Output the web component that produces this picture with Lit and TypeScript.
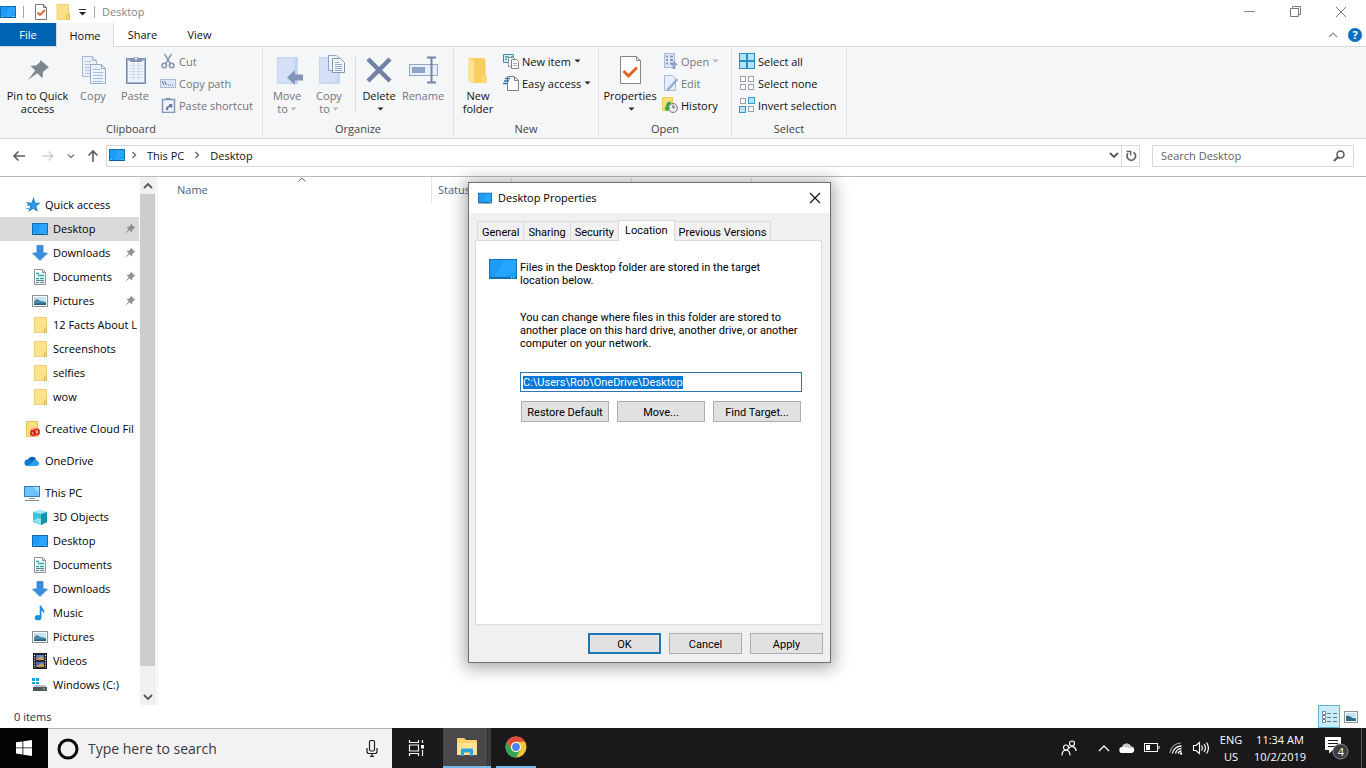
import { LitElement, html, svg, css, TemplateResult } from "lit";
import { customElement, query } from "lit/decorators.js";
import { classMap } from "lit/directives/class-map.js";

type Glyph = TemplateResult;

const icon = (w: number, h: number, body: unknown): Glyph =>
  html`<svg width=${w} height=${h} viewBox="0 0 ${w} ${h}" fill="none" aria-hidden="true">${body}</svg>`;

const deskShape = svg`
  <rect x=".5" y="2.500" width="15" height="11" fill="#1e9bf5" stroke="#0f6fb5"/>
  <path d="M9 3h6v6L9 13H5z" fill="#38b0ff" opacity=".5"/>
  <path d="M1 13.500h14" stroke="#0a5c9c"/><path d="M2 12.500h1M12 12.500h1M14 12.500h1" stroke="#9fd4fb"/>`;
const desktop = icon(16, 16, deskShape);
const desktopLarge = icon(28, 20, svg`
  <rect x=".5" y=".5" width="27" height="19" fill="#1c9bfa" stroke="#1277bd"/>
  <path d="M15 1h12v11L14 18H6z" fill="#2fadff" opacity=".6"/>
  <path d="M1 18.500h26" stroke="#0f6cab"/><path d="M22 18.500h1M24 18.500h1" stroke="#d8f0ff"/>`);
const folder = icon(16, 16, svg`
  <path d="M2.500.5h12v15h-12z" fill="#fbe28b" stroke="#efcf69"/>
  <path d="M12.500 15.500v-4l1-1h1v5z" fill="#f6d772" stroke="#e3bd4c"/>`);
const download = icon(16, 16, svg`<path d="M5 0.500h6v7.500h4.500L8 15.500.5 8H5z" fill="#3e8ddd" stroke="#2f7ac5" stroke-width=".7"/>`);
const documentIcon = icon(16, 16, svg`
  <path d="M2.500.5h8l3 3v12h-11z" fill="#fff" stroke="#8a9298"/><path d="M10.500.5v3h3" stroke="#8a9298"/>
  <path d="M4 4.500h3M6 6.500h6M4 9.500h3M8 9.500h4" stroke="#22a5a5" stroke-width="1.500"/>
  <path d="M4 11.500h8M4 13.500h3M8 13.500h4" stroke="#557b8c"/>`);
const picture = icon(16, 16, svg`
  <rect x=".5" y="2.500" width="15" height="11" fill="#fff" stroke="#8d9297"/>
  <path d="M2 4h12v5H2z" fill="#bfe4f7"/><path d="M2 8l3-2 4 2 5 1v3H2z" fill="#4b8aa0"/><path d="M2 11c4-1 7 0 12-1v2H2z" fill="#235f86"/>`);
const star = icon(16, 16, svg`
  <path d="M9.500 2l1.300 4.100 4.200.3-3.300 2.700 1.200 4.400-3.800-2.400-3.700 2.400 1.500-4.300L4 6.400l4-.2z" fill="#2f9fe8" stroke="#1e83cc" stroke-width="1.200"/>
  <path d="M2.500 5.500h3M3 8.500h3M2 11.500h3" stroke="#49a7e2"/>`);
const cloudFiles = icon(16, 16, svg`
  <path d="M2.500.5h11v15h-11z" fill="#fbdf83" stroke="#e8bd55"/>
  <rect x="6" y="6.500" width="10" height="9" rx="4" fill="#f6a08a"/>
  <circle cx="9" cy="12" r="2.200" stroke="#d2190b" stroke-width="1.400"/><circle cx="12.500" cy="11" r="2.600" stroke="#d2190b" stroke-width="1.400"/>`);
const oneDrive = icon(16, 16, svg`
  <path d="M4 6.500a4.500 4.500 0 0 1 8-.7L9 12H3a3 3 0 0 1 1-5.500z" fill="#0a62b8"/>
  <path d="M3.500 6.500c2 0 3 1 5 2.500L4 13a3.200 3.200 0 0 1-.5-6.500z" fill="#1379d4"/>
  <path d="M8 9.500c1-2.700 4-4 5.500-1.500A2.600 2.600 0 0 1 13 13H3.500z" fill="#2aa0ee"/>`);
const thisPc = icon(16, 16, svg`
  <rect x=".5" y="1.500" width="15" height="10" fill="#6cc2fb" stroke="#347fb5"/><path d="M9 2h6v6z" fill="#a6dcff"/>
  <path d="M5 13.500h6" stroke="#8ba2b2"/><path d="M1 15.500h14" stroke="#7f8d97"/>`);
const cube = icon(16, 16, svg`
  <path d="M8 1l7 2v10l-6 3-8-3V3z" fill="#3cc3dc"/><path d="M1 3l7-2 7 2-6 2z" fill="#9fe8f2"/>
  <path d="M9 5l6-2v10l-6 3z" fill="#1493ae"/><path d="M1 12l5-3 3 1v6z" fill="#8fe3ee"/>`);
const music = icon(16, 16, svg`
  <ellipse cx="6" cy="12.700" rx="3.300" ry="2.600" fill="#1c8fe0"/>
  <path d="M7.700 13V.5h1.500c.3 3 4.600 4 2.800 8.500-.3-2-1.500-3-2.500-3.300V13z" fill="#1c8fe0"/>`);
const video = icon(16, 16, svg`
  <rect x="1.500" y=".5" width="13" height="15" fill="#2b2b33" stroke="#222"/>
  <path d="M4 2h8v5H4z" fill="#5b79cc"/><path d="M4 9h8v5H4z" fill="#4d6cc0"/><path d="M5 6l4-3 3 3v1H4z" fill="#c8a24a"/><path d="M5 13l5-3 2 2v2H4z" fill="#c8a24a"/>
  <path d="M2.500 2v13M13.500 2v13" stroke="#e8e8e8" stroke-dasharray="1 1.500"/>`);
const drive = icon(16, 16, svg`
  <path d="M0 1h3v3H0zM4 1h3v3H4zM0 5h3v2H0zM4 5h3v2H4z" fill="#18a4dc"/>
  <path d="M3 8h10l2 3H1z" fill="#b9bfc3"/><rect x="1" y="10" width="14" height="4" fill="#50575c"/><path d="M11 12h2" stroke="#7fe08a"/>`);
const pinSmall = icon(12, 12, svg`
  <path d="M7 .8L11.200 5 9.800 5.600 8.300 7.100 8 9.500 5.500 7.200.8 11.200 4.600 6.300 2.500 4 4.900 3.700 6.400 2.200z" fill="#8d9196"/>`);

const checkPage = icon(14, 16, svg`
  <path d="M1.500.5h8l3 3v12h-11z" fill="#fff" stroke="#767676"/><path d="M9.500.5v3h3" stroke="#767676"/>
  <path d="M3.500 8.500l2.500 2.500 5-5" stroke="#e0622d" stroke-width="1.800"/>`);
const folderTiny = icon(14, 16, svg`
  <path d="M1 .5h11.500v15H1z" fill="#fce08a" stroke="#f2d172"/><path d="M10.500 15.500v-4l1-1.500h2v5.500z" fill="#f6d66e" stroke="#e5c050"/>`);
const customize = icon(9, 8, svg`<path d="M1 1.500h7" stroke="#333"/><path d="M1 4h7L4.500 7.500z" fill="#222"/>`);

const pinLarge = icon(32, 32, svg`
  <path d="M18.500 6L27 13.500l-2 1-4 3.500-.5 6.300-5.300-5L6 26l7.200-9.500L8.500 12l6-.7 3.500-3.300z" fill="#7f858d"/>`);
const copyLarge = icon(32, 32, svg`
  <path d="M5.500 2.500h10l4 4v16h-14z" fill="#eaf1fb" stroke="#a5b8d8"/><path d="M15.500 2.500v4h4" stroke="#a5b8d8"/>
  <path d="M8 7.500h6M8 10.500h9M8 13.500h6M8 16.500h6M8 19.500h6" stroke="#b2c4e2"/>
  <path d="M13.500 10.500h11l4 4v15h-15z" fill="#edf3fc" stroke="#94abd0"/><path d="M24.500 10.500v4h4" stroke="#94abd0"/>
  <path d="M16 15.500h7M16 18.500h10M16 21.500h10M16 24.500h10M16 27.500h10" stroke="#a6bbde"/>`);
const pasteLarge = icon(32, 32, svg`
  <rect x="7.500" y="4.500" width="19" height="25" fill="#a7b5d0" stroke="#7488b0"/>
  <rect x="9" y="7" width="16" height="21" fill="#f0f5fd"/>
  <path d="M10 11.500h14M10 14.500h14M10 17.500h14M10 20.500h14M10 23.500h14M14.500 8v19M19.500 8v19" stroke="#cddbf1"/>
  <path d="M11 8V5h3c0-3 6-3 6 0h3v3z" fill="#8996ad"/><circle cx="17" cy="4.500" r="1.200" fill="#fff"/>`);
const moveLarge = icon(32, 32, svg`
  <path d="M6 3h21v27H6z" fill="#c5d5ef"/><path d="M7 4h16v22l-4 3H7z" fill="#d3e0f5"/>
  <path d="M16 23.500l8-7.500v4.500h8v6h-8V31z" fill="#8496b7"/>`);
const copyToLarge = icon(32, 32, svg`
  <path d="M6 3h21v27H6z" fill="#c5d5ef"/><path d="M7 4h17v22l-4 3H7z" fill="#d3e0f5"/>
  <path d="M15.500 1.500h8l3 3v12h-11z" fill="#edf3fc" stroke="#8fa2c4"/>
  <path d="M19.500 4.500h8l4 4v10h-12z" fill="#f3f7fd" stroke="#8095ba"/>
  <path d="M22 8.500h4M22 10.500h7M22 12.500h7M22 14.500h7M22 16.500h7" stroke="#93a9cb"/>`);
const deleteLarge = icon(32, 32, svg`<path d="M5 5l22 22M27 5L5 27" stroke="#7081a5" stroke-width="4.500"/>`);
const renameLarge = icon(32, 32, svg`
  <rect x="2.500" y="10.500" width="28" height="11" fill="#eaf0fa" stroke="#94a5c8"/><rect x="5" y="13" width="13" height="6" fill="#8ea3c9"/>
  <path d="M20 3.500h4.500v25H20M24.500 3.500H29M24.500 28.500H29" stroke="#7385ab" stroke-width="2"/>`);
const newFolderLarge = icon(32, 32, svg`
  <path d="M6 4h17v25H10z" fill="#f9cf60"/><path d="M6 4l6 3v23l-6-3z" fill="#fde39a"/>
  <path d="M20 29v-6l2-2h3v8z" fill="#fbd97c"/><path d="M12 7h11v14" stroke="#f7c656"/>`);
const propertiesLarge = icon(32, 32, svg`
  <path d="M6.500 2.500h16l4 4v23h-20z" fill="#fff" stroke="#858585"/><path d="M22.500 2.500v4h4" stroke="#858585"/>
  <path d="M9.500 17l5 5 8.500-8.500" stroke="#e25f24" stroke-width="2.800"/>`);

const cut = icon(16, 16, svg`
  <path d="M4.500 1l6 10M11.500 1l-6 10" stroke="#8f9bb0" stroke-width="1.500"/>
  <circle cx="4.300" cy="12.500" r="2.300" stroke="#8795b0" stroke-width="1.500"/><circle cx="11.700" cy="12.500" r="2.300" stroke="#8795b0" stroke-width="1.500"/>`);
const copyPath = icon(16, 16, svg`
  <rect x=".5" y="4.500" width="15" height="8" fill="#dfe8f7" stroke="#a9b9d6"/><path d="M2 6l2 4M4.500 6l2 4" stroke="#56688c"/><path d="M8 10h1M10 10h1M12 10h1" stroke="#56688c"/>`);
const pasteShortcut = icon(16, 16, svg`
  <rect x="2.500" y="2.500" width="12" height="13" fill="#eef3fb" stroke="#8496bb" stroke-width="1.500"/><path d="M6 1h5v2H6z" fill="#8190ab"/>
  <path d="M6 13c0-3 .5-4 3-4V7l3.500.3-.5 4L10.500 10C8.500 10 8 11 8 13z" fill="#6277a0"/>`);
const newItem = icon(16, 16, svg`
  <path d="M.5 1.500h10v8H.5z" fill="#d9f1f3" stroke="#438d9f"/><path d="M2 4h4M8 4h2M2 6.500h2" stroke="#4b96a8" stroke-width="1.500"/>
  <path d="M5.500 4.500h5l2 2v7h-7z" fill="#fff" stroke="#8e9499"/><path d="M8.500 6.500h5l2 2v7h-7z" fill="#fff" stroke="#80868b"/><path d="M10 10.500h4M10 12.500h4" stroke="#a3abb0"/>`);
const easyAccess = icon(16, 16, svg`
  <path d="M4.500 1.500h7l4 4v10h-11z" fill="#fff" stroke="#7d8388"/><path d="M11.500 1.500v4h4" stroke="#7d8388"/>
  <path d="M2 3.500h5M1 6h5M0 8.500h4" stroke="#2e74a8" stroke-width="1.500"/>`);
const openSmall = icon(16, 16, svg`
  <rect x="2.500" y=".5" width="10" height="14" fill="#dfe8f7" stroke="#a9b9d8"/><path d="M4 3.500h2M8 3.500h3M4 7h2M8 7h3M4 10.500h2M8 10.500h2" stroke="#8397c0" stroke-width="2"/>
  <path d="M12 8l4 4h-2.500v4h-3v-4H8z" fill="#8ea0c6"/>`);
const editSmall = icon(16, 16, svg`
  <path d="M2.500.5h8l3 3v12h-11z" fill="#e6edf9" stroke="#a9b9d8"/><path d="M15.500 4L8 12.500 5.500 15" stroke="#9aabca" stroke-width="2.500"/>`);
const historySmall = icon(16, 16, svg`
  <path d="M.5.5h10v13H.5z" fill="#fbdf7d" stroke="#efca5b"/><circle cx="11" cy="11" r="4.500" fill="#e7e9ea" stroke="#777d80"/>
  <path d="M11 8v3l2-1" stroke="#555"/><path d="M9 4.500c-4 0-5.500 3-5 6H2l3 4 3.500-4H6.500c0-2 .5-3 2.500-4z" fill="#36a544"/>`);

const sq = (x: number, y: number, on: boolean) =>
  svg`<rect x=${x + 0.5} y=${y + 0.5} width=${on ? 6 : 5} height=${on ? 6 : 5} fill=${on ? "#b5e5fb" : "#fff"} stroke=${on ? "#3a97cd" : "#9aa0a5"}/>`;
const selectAll = icon(16, 16, svg`<rect x=".5" y=".5" width="15" height="15" fill="#b0e4fb" stroke="#2f8cc2"/><path d="M8 0v16M0 8h16" stroke="#2f8cc2" stroke-width="2"/>`);
const selectNone = icon(16, 16, svg`${sq(1, 1, false)}${sq(9, 1, false)}${sq(1, 9, false)}${sq(9, 9, false)}`);
const invert = icon(16, 16, svg`${sq(1, 1, false)}${sq(9, 0, true)}${sq(0, 9, true)}${sq(9, 9, false)}`);

const back = icon(14, 12, svg`<path d="M13 6H2M6.500 1.500L2 6l4.500 4.500" stroke="#5b5d60" stroke-width="1.600"/>`);
const forward = icon(14, 12, svg`<path d="M1 6h11M7.500 1.500L12 6l-4.500 4.500" stroke="#cfd0d2" stroke-width="1.400"/>`);
const up = icon(12, 14, svg`<path d="M6 13V2M1.500 6.500L6 2l4.500 4.500" stroke="#5b5d60" stroke-width="1.600"/>`);
const chevDown = icon(8, 6, svg`<path d="M1 1.500l3 3 3-3" stroke="#77797c" stroke-width="1.300"/>`);
const chevDownBold = icon(10, 8, svg`<path d="M1 2l4 4 4-4" stroke="#55575a" stroke-width="1.800"/>`);
const chevUp = icon(10, 8, svg`<path d="M1 6l4-4 4 4" stroke="#55575a" stroke-width="1.800"/>`);
const chevUpThin = icon(10, 7, svg`<path d="M1 6l4-4 4 4" stroke="#8b8d90" stroke-width="1.200"/>`);
const sortMark = icon(8, 5, svg`<path d="M.5 4.500l3.500-3.500 3.500 3.500" stroke="#66686b"/>`);
const chevRight = icon(6, 8, svg`<path d="M1.500 1L4.500 4l-3 3" stroke="#66686b" stroke-width="1.400"/>`);
const refresh = icon(12, 12, svg`<path d="M8.500 2.300A4.300 4.300 0 1 1 3 3.200" stroke="#606265" stroke-width="1.700"/><path d="M1.500 1.500h4.200v4" stroke="#606265" stroke-width="1.400"/>`);
const magnify = icon(12, 12, svg`<circle cx="7.500" cy="4.500" r="3.500" stroke="#55575a" stroke-width="1.500"/><path d="M5 7L1 11" stroke="#55575a" stroke-width="2"/>`);
const caret = (c: string) => icon(7, 4, svg`<path d="M.5.5h6l-3 3z" fill=${c}/>`);

const minimize = icon(11, 11, svg`<path d="M0 5.500h11" stroke="#888"/>`);
const restore = icon(11, 11, svg`<path d="M.5 2.500h8v8h-8zM2.500 2.500v-2h8v8h-2" stroke="#777"/>`);
const close = icon(12, 12, svg`<path d="M1 1l10 10M11 1L1 11" stroke="#777"/>`);
const closeDark = icon(12, 12, svg`<path d="M1 1l10 10M11 1L1 11" stroke="#111" stroke-width="1.200"/>`);

const details = icon(16, 16, svg`
  <path d="M1.500 2.500h3v3h-3zM1.500 6.500h3v3h-3zM1.500 10.500h3v3h-3z" stroke="#6f8793" fill="#fff"/>
  <path d="M6 4.500h4M12 4.500h4M6 8.500h4M12 8.500h4M6 12.500h4M12 12.500h4" stroke="#5d7c8c"/>`);
const thumbs = icon(14, 12, svg`<rect x=".5" y=".5" width="13" height="11" fill="#fff" stroke="#8d9297"/><path d="M2 2h10v4H2z" fill="#bfe4f7"/><path d="M2 5c4-1 6 3 10 2v3H2z" fill="#2d6d8c"/>`);

const windowsLogo = icon(16, 16, svg`<path d="M0 2.300l6.500-.9v6.100H0zM7.300 1.300L16 0v7.500H7.300zM0 8.300h6.500v6.200L0 13.600zM7.300 8.300H16V16l-8.700-1.300z" fill="#fff"/>`);
const cortana = icon(22, 22, svg`<circle cx="11" cy="11" r="9" stroke="#0b0b0b" stroke-width="3"/>`);
const mic = icon(12, 17, svg`<rect x="3.500" y=".5" width="5" height="10.500" rx="1.500" stroke="#222" stroke-width="1.200"/><path d="M1 8v3.500c0 1.500 1 2 2 2h6c1 0 2-.5 2-2V8M6 13.500v3M4 16.400h4" stroke="#222" stroke-width="1.200"/>`);
const taskView = icon(16, 16, svg`<path d="M1.500 0v2.500h9V0M1.500 16v-2.500h9V16M1.500 5h9v6h-9zM14.500 0v3M14.500 10v6" stroke="#f2f2f2" stroke-width="1.200"/><path d="M13 5h3v3.500h-3z" fill="#fff"/>`);
const explorer = icon(22, 20, svg`
  <path d="M1 2c0-1 0-1 1-1h6l2 2h10c1 0 1 0 1 1v14H1z" fill="#f9d568"/><path d="M1 6h20v12H1z" fill="#fde391"/>
  <path d="M5 19v-6c0-1 .5-1.500 1.500-1.500h9c1 0 1.500.5 1.500 1.500v6h-3v-3.500H8V19z" fill="#2ea3d9"/>`);
const chrome = icon(22, 22, svg`
  <circle cx="11" cy="11" r="10.500" fill="#f2c82e"/>
  <path d="M1.900 5.750A10.500 10.500 0 0 1 20.100 5.750H11A5.250 5.250 0 0 0 6.400 13.600z" fill="#e04a3c"/>
  <path d="M1.900 5.750A10.500 10.500 0 0 0 11 21.500l4.550-7.900A5.250 5.250 0 0 1 6.450 13.600z" fill="#33a355"/>
  <circle cx="11" cy="11" r="5" fill="#fff"/><circle cx="11" cy="11" r="3.900" fill="#4a84ec"/>`);
const people = icon(16, 16, svg`
  <circle cx="5" cy="7.500" r="2.500" stroke="#fff" stroke-width="1.200"/><path d="M1 15.500c0-7 8-7 8 0" stroke="#fff" stroke-width="1.200"/>
  <circle cx="11" cy="3.500" r="2.500" stroke="#fff" stroke-width="1.200"/><path d="M8 8c2.500-3 7-1 7 3" stroke="#fff" stroke-width="1.200"/>`);
const trayUp = icon(12, 8, svg`<path d="M1 7l5-5 5 5" stroke="#fff" stroke-width="1.300"/>`);
const trayCloud = icon(16, 12, svg`<path d="M3.500 11a3 3 0 0 1-.3-6A4.700 4.700 0 0 1 12 4.500 3.300 3.300 0 0 1 12.700 11z" fill="#fff"/><path d="M3 5.500C6 4 9 7 14 6a4 4 0 0 0-2-1.500A4.700 4.700 0 0 0 3 5.500z" fill="#c9c9c9"/>`);
const battery = icon(16, 10, svg`<rect x=".5" y=".5" width="13" height="8" stroke="#fff"/><path d="M2 2h4v5H2z" fill="#fff"/><path d="M15 3v3" stroke="#fff"/>`);
const wifi = icon(14, 14, svg`<path d="M1 12A11 11 0 0 1 12 2" stroke="#9b9b9b" stroke-width="1.200"/><path d="M3.500 12.500A9 9 0 0 1 12.500 5M6.500 12.500A6 6 0 0 1 12.500 7.500M9 12.500a3.500 3.500 0 0 1 3.500-2.500" stroke="#fff" stroke-width="1.300"/><circle cx="12" cy="12.500" r="1.200" fill="#fff"/>`);
const volume = icon(18, 14, svg`<path d="M1.500 4.500h2.500L7.500 1.500v11L4 9.500H1.500z" stroke="#fff" stroke-width="1.100"/><path d="M9.500 4.500c1 1.500 1 3.500 0 5M12 3c1.800 2.500 1.800 5.500 0 8M14.500 1.500c2.500 3.500 2.500 7.500 0 11" stroke="#fff" stroke-width="1.200"/>`);
const action = icon(26, 26, svg`<path d="M1 2h16v13H9l-4 3.500V15H1z" fill="#fff"/><path d="M4 5.500h10M4 8.500h10M4 11.500h7" stroke="#1b1a1c"/>
  <circle cx="16.500" cy="16.500" r="7.500" fill="#3f3d40" stroke="#8c8a8c"/>`);

interface NavItem { label: string; glyph: Glyph; level: 0 | 1; pinned?: boolean; selected?: boolean; spaced?: boolean }
const NAV: NavItem[] = [
  { label: "Quick access", glyph: star, level: 0 },
  { label: "Desktop", glyph: desktop, level: 1, pinned: true, selected: true },
  { label: "Downloads", glyph: download, level: 1, pinned: true },
  { label: "Documents", glyph: documentIcon, level: 1, pinned: true },
  { label: "Pictures", glyph: picture, level: 1, pinned: true },
  { label: "12 Facts About L", glyph: folder, level: 1 },
  { label: "Screenshots", glyph: folder, level: 1 },
  { label: "selfies", glyph: folder, level: 1 },
  { label: "wow", glyph: folder, level: 1 },
  { label: "Creative Cloud Fil", glyph: cloudFiles, level: 0, spaced: true },
  { label: "OneDrive", glyph: oneDrive, level: 0, spaced: true },
  { label: "This PC", glyph: thisPc, level: 0, spaced: true },
  { label: "3D Objects", glyph: cube, level: 1 },
  { label: "Desktop", glyph: desktop, level: 1 },
  { label: "Documents", glyph: documentIcon, level: 1 },
  { label: "Downloads", glyph: download, level: 1 },
  { label: "Music", glyph: music, level: 1 },
  { label: "Pictures", glyph: picture, level: 1 },
  { label: "Videos", glyph: video, level: 1 },
  { label: "Windows (C:)", glyph: drive, level: 1 },
];

const base = css`
  * { box-sizing: border-box; }
  svg { display: block; flex: none; }
  button, input { font: inherit; color: inherit; margin: 0; padding: 0; border: 0; background: none; border-radius: 0; outline: 0; }
`;

@customElement("properties-dialog")
class PropertiesDialog extends LitElement {
  static styles = [base, css`
    :host { display: flex; flex-direction: column; background: #f0f0f0; border: 1px solid #6e6e70; box-shadow: 0 2px 16px 3px rgba(0, 0, 0, .35);
      font: 11px/13px Roboto, "Liberation Sans", Arial, sans-serif; color: #000; }
    .title { display: flex; align-items: center; gap: 6px; height: 30px; padding: 0 9px 1px; background: #fff; font: 11px/16px "Open Sans", sans-serif; }
    .title h2 { flex: 1; margin: 0; font: inherit; }
    .title svg { width: 14px; height: 14px; }
    .close svg { width: 12px; height: 12px; }
    .tabs { display: flex; align-items: flex-end; height: 27px; padding: 0 8px; }
    .tab { height: 19px; padding: 2px 4px 0; border: 1px solid #d9d9d9; border-width: 1px 1px 0 0; }
    .tab:first-child { border-left-width: 1px; }
    .tab.on { z-index: 1; height: 21px; padding: 0 6px 2px; background: #fff; margin-bottom: -1px; }
    .panel { flex: 1; margin: 0 8px 0 6px; padding: 18px 19px 0 13px; background: #fff; border: 1px solid #dcdcdc; }
    .intro { display: flex; gap: 3px; }
    .intro p { margin: 2px 0 0; }
    .rest { padding-left: 31px; }
    .rest p { margin: 24px 0 22px; }
    .path { display: block; width: 100%; height: 20px; padding: 0 2px; border: 1px solid #2a77ad; background: #fff; }
    .path::selection { background: #0078d7; color: #fff; }
    .row { display: grid; grid-template-columns: repeat(3, 1fr); gap: 8px; padding: 9px 1px 0; }
    .btn { height: 21px; padding-top: 2px; background: #e1e1e1; border: 1px solid #adadad; }
    .foot { display: flex; justify-content: flex-end; gap: 8px; padding: 8px 7px; }
    .foot .btn { width: 73px; }
    .foot .primary { border: 2px solid #1a78ba; }
  `];

  @query(".path") private path!: HTMLInputElement;

  firstUpdated() {
    this.path.focus();
    this.path.select();
  }

  render() {
    const tabs = ["General", "Sharing", "Security", "Location", "Previous Versions"];
    return html`
      <div class="title">${desktop}<h2>Desktop Properties</h2><button class="close" aria-label="Close">${closeDark}</button></div>
      <div class="tabs" role="tablist">
        ${tabs.map(t => html`<button role="tab" class=${classMap({ tab: true, on: t === "Location" })}>${t}</button>`)}
      </div>
      <div class="panel">
        <div class="intro">${desktopLarge}<p>Files in the Desktop folder are stored in the target<br>location below.</p></div>
        <div class="rest">
          <p>You can change where files in this folder are stored to<br>another place on this hard drive, another drive, or another<br>computer on your network.</p>
          <input class="path" aria-label="Folder location" .value=${"C:\\Users\\Rob\\OneDrive\\Desktop"} spellcheck="false">
          <div class="row">
            <button class="btn">Restore Default</button><button class="btn">Move...</button><button class="btn">Find Target...</button>
          </div>
        </div>
      </div>
      <div class="foot"><button class="btn primary">OK</button><button class="btn">Cancel</button><button class="btn">Apply</button></div>`;
  }
}

@customElement("app-root")
class AppRoot extends LitElement {
  static styles = [base, css`
    :host { display: flex; flex-direction: column; height: 100vh; overflow: hidden; background: #fff; color: #111;
      font: 11px/13px "Open Sans", "Noto Sans", sans-serif; }
    .titlebar { display: flex; align-items: center; height: 23px; padding-right: 2px; color: #858585; }
    .quick { display: flex; align-items: center; gap: 8px; flex: 1; }
    .quick .bar { width: 1px; height: 12px; background: #a5a5a5; margin: 0 -1px; }
    .quick .bar:nth-of-type(1) { margin-right: 2px; }
    .win { display: flex; }
    .win button { width: 46px; display: grid; place-items: center; }
    .tabs { display: flex; height: 24px; border-bottom: 1px solid #dadbdc; }
    .tabs > button { width: 57px; height: 23px; }
    .tabs .filetab { width: 56px; background: #0063b1; color: #fff; }
    .tabs .on { width: 58px; height: 24px; background: #f5f6f7; border: 1px solid #dadbdc; border-width: 0 1px; }
    .tabs .tools { display: flex; align-items: center; gap: 10px; margin-left: auto; padding-right: 4px; }
    .help { display: grid; place-items: center; width: 14px; height: 14px; border-radius: 50%; background: #0a6fc4; color: #fff; font-weight: 700; }
    .ribbon { display: flex; height: 92px; background: #f5f6f7; border-bottom: 1px solid #dadbdc; }
    .group { display: flex; flex-direction: column; border-right: 1px solid #e0e1e2; padding: 4px 3px 1px; margin: 1px 0; text-align: center; color: #444; }
    .group.clipboard { width: 263px; } .group.organize { width: 191px; } .group.new { width: 145px; } .group.open { width: 133px; } .group.select { width: 115px; }
    .cmds { display: flex; flex: 1; align-items: flex-start; }
    .big { display: flex; flex-direction: column; align-items: center; gap: 3px; width: 42px; padding-top: 2px; color: #111; }
    .big svg { margin: 0 auto; }
    .big span { white-space: nowrap; }
    .big span svg { display: inline-block; margin-left: 2px; vertical-align: 2px; }
    .wide { width: 69px; }
    .mid { width: 56px; }
    .rename { width: 46px; }
    .off { color: #737579; }
    .split { width: 1px; height: 56px; margin: 4px 2px 0 5px; background: #dcdde0; }
    .small { display: flex; flex-direction: column; margin-top: -2px; padding-left: 4px; }
    .small button { display: flex; align-items: center; gap: 3px; height: 22px; white-space: nowrap; }
    .small button:not(.off) { color: #111; }
    .gname { line-height: 14px; }
    .address { display: flex; align-items: flex-start; height: 38px; padding: 6px 12px; border-bottom: 1px solid #b9babd; }
    .nav { display: flex; align-items: center; gap: 12px; width: 94px; height: 22px; }
    .nav button:first-child { margin-right: 3px; }
    .crumbs { display: flex; align-items: center; flex: 1; height: 22px; border: 1px solid #d9d9d9; padding: 0 0 2px 2px; gap: 10px; }
    .crumbs > svg:first-child { margin-right: -4px; }
    .crumbs .fill { flex: 1; }
    .crumbs .reload { display: grid; place-items: center; width: 18px; height: 20px; border-left: 1px solid #d9d9d9; margin: 0 0 -2px -8px; }
    .find { display: flex; align-items: center; width: 202px; height: 22px; margin-left: 12px; padding: 0 8px; border: 1px solid #d9d9d9; }
    .find input, .ask input { flex: 1; min-width: 0; width: 0; }
    .find input { padding-bottom: 2px; }
    .find input::placeholder { color: #5f6164; opacity: 1; }
    .main { display: flex; flex: 1; min-height: 0; }
    .side { width: 140px; padding: 16px 1px 0 0; overflow: hidden; }
    .item { display: flex; align-items: center; gap: 5px; height: 24px; padding-left: 24px; color: #000; text-decoration: none; white-space: nowrap; line-height: 16px; }
    .item.child { padding-left: 32px; }
    .item.sel { background: #d9d9d9; }
    .item.spaced { margin-top: 8px; }
    .item span { flex: 1; }
    .item .pin { margin-right: 3px; }
    .scroll { display: flex; flex-direction: column; width: 16px; background: #f0f0f0; }
    .scroll > * { display: grid; place-items: center; height: 17px; }
    .scroll .thumb { flex: 1; margin: 0 1px 22px 0; background: #cdcdcd; }
    .list { flex: 1; margin-left: 1px; border-left: 1px solid #f0f0f2; }
    .cols { display: grid; grid-template-columns: 274px 80px 120px 120px; height: 26px; color: #4c607a; line-height: 26px; }
    .cols div { border-right: 1px solid #e2e3e5; padding-left: 6px; }
    .cols .first { display: flex; justify-content: space-between; padding: 0 125px 0 19px; }
    .status { display: flex; align-items: center; height: 23px; padding: 0 8px 0 14px; gap: 4px; color: #22304a; }
    .status span { flex: 1; }
    .status .mode { display: grid; place-items: center; width: 22px; height: 23px; background: #c9ecf9; border: 1px solid #62b2d3; }
    .taskbar { display: flex; height: 40px; background: #1a181b; color: #fff; }
    .taskbar button { display: grid; place-items: center; }
    .start { width: 48px; background: #050505; }
    .ask { display: flex; align-items: center; width: 344px; gap: 9px; padding: 0 14px 0 9px; background: #f2f1f3; border-top: 1px solid #b5b5b7; }
    .ask input { font-size: 14px; }
    .ask input::placeholder { color: #3a3a3c; opacity: 1; }
    .task { width: 48px; }
    .app { width: 48px; border-bottom: 2px solid #76b9ed; }
    .app.active { background: linear-gradient(90deg, #4a484b 44px, #2c2a2d 44px, #3c3a3d 45px); margin: 0 5px 0 3px; }
    .app.other { width: 40px; }
    .tray { display: flex; align-items: center; margin-left: auto; gap: 9px; line-height: 17px; text-align: center; padding-right: 4px; }
    .tray .gap { width: 3px; }
    .tray .lang { width: 24px; }
    .tray .clock { width: 56px; }
    .tray .note { display: grid; width: 26px; margin: 0 2px 0 7px; }
    .note > * { grid-area: 1 / 1; }
    .note b { font-weight: 400; place-self: end; padding: 0 6px 1px 0; line-height: 16px; }
    .edge { width: 1px; height: 40px; background: #5a585b; }
    .dialog { position: absolute; left: 468px; top: 182px; width: 363px; height: 481px; }
  `];

  private big(glyph: Glyph, label: unknown, cls = "") {
    return html`<button class="big ${cls}">${glyph}<span>${label}</span></button>`;
  }

  private line(glyph: Glyph, label: string, cls = "", drop?: Glyph) {
    return html`<button class=${cls}>${glyph}<span>${label}</span>${drop ?? ""}</button>`;
  }

  private group(name: string, body: unknown) {
    return html`<section class="group ${name.toLowerCase()}"><div class="cmds">${body}</div><div class="gname">${name}</div></section>`;
  }

  render() {
    const dark = caret("#222");
    const pale = caret("#b3b5b8");
    return html`
      <header class="titlebar">
        <div class="quick">${desktop}<i class="bar"></i>${checkPage}${folderTiny}${customize}<i class="bar"></i><span>Desktop</span></div>
        <div class="win">
          <button aria-label="Minimize">${minimize}</button><button aria-label="Restore">${restore}</button><button aria-label="Close">${close}</button>
        </div>
      </header>
      <nav class="tabs">
        <button class="filetab">File</button><button class="on">Home</button><button>Share</button><button>View</button>
        <div class="tools"><button aria-label="Collapse ribbon">${chevUpThin}</button><button class="help" aria-label="Help">?</button></div>
      </nav>
      <div class="ribbon">
        ${this.group("Clipboard", html`
          ${this.big(pinLarge, html`Pin to Quick<br>access`, "wide")}${this.big(copyLarge, "Copy", "off")}${this.big(pasteLarge, "Paste", "off")}
          <div class="small">${this.line(cut, "Cut", "off")}${this.line(copyPath, "Copy path", "off")}${this.line(pasteShortcut, "Paste shortcut", "off")}</div>`)}
        ${this.group("Organize", html`
          ${this.big(moveLarge, html`Move<br>to${pale}`, "off")}${this.big(copyToLarge, html`Copy<br>to${pale}`, "off")}
          <i class="split"></i>
          ${this.big(deleteLarge, html`Delete<br>${dark}`)}${this.big(renameLarge, "Rename", "rename off")}`)}
        ${this.group("New", html`
          ${this.big(newFolderLarge, html`New<br>folder`)}
          <div class="small">${this.line(newItem, "New item", "", dark)}${this.line(easyAccess, "Easy access", "", dark)}</div>`)}
        ${this.group("Open", html`
          ${this.big(propertiesLarge, html`Properties<br>${dark}`, "mid")}
          <div class="small">${this.line(openSmall, "Open", "off", pale)}${this.line(editSmall, "Edit", "off")}${this.line(historySmall, "History")}</div>`)}
        ${this.group("Select", html`
          <div class="small">${this.line(selectAll, "Select all")}${this.line(selectNone, "Select none")}${this.line(invert, "Invert selection")}</div>`)}
      </div>
      <div class="address">
        <div class="nav">
          <button aria-label="Back">${back}</button><button aria-label="Forward">${forward}</button><button aria-label="Recent">${chevDown}</button><button aria-label="Up">${up}</button>
        </div>
        <div class="crumbs">${desktop}${chevRight}<span>This PC</span>${chevRight}<span>Desktop</span><i class="fill"></i>
          <button aria-label="History">${chevDownBold}</button><button class="reload" aria-label="Refresh">${refresh}</button></div>
        <label class="find"><input type="text" placeholder="Search Desktop" aria-label="Search Desktop">${magnify}</label>
      </div>
      <div class="main">
        <nav class="side">
          ${NAV.map(n => html`<a href="#" class=${classMap({ item: true, child: n.level === 1, sel: !!n.selected, spaced: !!n.spaced })}>
            ${n.glyph}<span>${n.label}</span>${n.pinned ? html`<i class="pin">${pinSmall}</i>` : ""}</a>`)}
        </nav>
        <div class="scroll"><div>${chevUp}</div><div class="thumb"></div><div>${chevDownBold}</div></div>
        <main class="list">
          <div class="cols"><div class="first"><span>Name</span>${sortMark}</div><div>Status</div><div></div><div></div></div>
        </main>
      </div>
      <footer class="status"><span>0 items</span><button class="mode" aria-label="Details view">${details}</button><button aria-label="Thumbnail view">${thumbs}</button></footer>
      <div class="taskbar">
        <button class="start" aria-label="Start">${windowsLogo}</button>
        <label class="ask">${cortana}<input type="text" placeholder="Type here to search" aria-label="Type here to search">${mic}</label>
        <button class="task" aria-label="Task view">${taskView}</button>
        <button class="app active" aria-label="File Explorer">${explorer}</button>
        <button class="app other" aria-label="Chrome">${chrome}</button>
        <div class="tray">${people}<i class="gap"></i>${trayUp}${trayCloud}${battery}${wifi}${volume}
          <div class="lang">ENG<br>US</div><div class="clock">11:34 AM<br>10/2/2019</div>
          <div class="note">${action}<b>4</b></div><i class="edge"></i></div>
      </div>
      <properties-dialog class="dialog" role="dialog" aria-label="Desktop Properties"></properties-dialog>`;
  }
}
